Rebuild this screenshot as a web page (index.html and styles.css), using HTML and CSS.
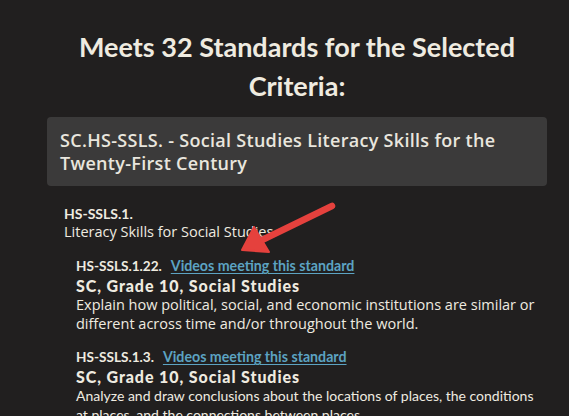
FILE: index.html
```html
<!DOCTYPE html>
<html lang="en">
<head>
<meta charset="utf-8">
<title>Standards</title>
<link rel="stylesheet" href="styles.css">
</head>
<body>
<div class="page">
  <h1 class="title">Meets 32 Standards for the Selected Criteria:</h1>
  <div class="domain">SC.HS-SSLS. - Social Studies Literacy Skills for the Twenty-First Century</div>
  <div class="strand">
    <div class="strand-code">HS-SSLS.1.</div>
    <div class="strand-name">Literacy Skills for Social Studies</div>
  </div>
  <div class="standard">
    <div class="std-head"><span class="std-code">HS-SSLS.1.22.</span><a class="std-link" href="#">Videos meeting this standard</a></div>
    <div class="std-grade">SC, Grade 10, Social Studies</div>
    <div class="std-desc">Explain how political, social, and economic institutions are similar or different across time and/or throughout the world.</div>
  </div>
  <div class="standard">
    <div class="std-head"><span class="std-code">HS-SSLS.1.3.</span><a class="std-link" href="#">Videos meeting this standard</a></div>
    <div class="std-grade">SC, Grade 10, Social Studies</div>
    <div class="std-desc std-desc-compact">Analyze and draw conclusions about the locations of places, the conditions at places, and the connections between places.</div>
  </div>
</div>
<svg class="arrow" width="569" height="416" viewBox="0 0 569 416" aria-hidden="true">
  <line x1="332" y1="206" x2="258" y2="242" stroke="#e5413d" stroke-width="6.5" stroke-linecap="round"/>
  <polygon points="242,250 254,227 269,252" fill="#e5413d" stroke="#e5413d" stroke-width="2" stroke-linejoin="round"/>
</svg>
</body>
</html>
```

FILE: styles.css
```css
html, body {
  margin: 0;
  padding: 0;
  background: #211f1f;
}
body {
  color: #efebe0;
  font-family: Lato, "Noto Sans", sans-serif;
  overflow: hidden;
  height: 416px;
}
.page {
  width: 500px;
  margin-left: 47px;
  display: flex;
  flex-direction: column;
}
.title {
  margin: 27px 0 0 0;
  padding: 0;
  text-align: center;
  font-size: 27px;
  line-height: 39px;
  font-weight: 700;
  color: #efebe0;
}
.domain {
  margin-top: 12px;
  background: #3b3a3a;
  border-radius: 4px;
  padding: 12px 14px 11px 13px;
  font-family: "Open Sans", Lato, sans-serif;
  font-size: 18px;
  line-height: 23px;
  font-weight: 600;
  letter-spacing: 0.3px;
  color: #e9e6de;
}
.strand {
  margin: 19px 0 0 17px;
  font-size: 14px;
  line-height: 18px;
}
.strand-code {
  font-weight: 700;
}
.strand-name {
  font-family: "Open Sans", Lato, sans-serif;
  font-size: 14.5px;
}
.standard {
  margin: 14px 0 0 29px;
  font-size: 14px;
  line-height: 19px;
  width: 482px;
}
.strand + .standard {
  margin-top: 15px;
}
.std-code {
  font-weight: 700;
  font-size: 13.6px;
}
.std-link {
  margin-left: 9px;
  color: #5ca3c2;
  font-weight: 700;
  font-size: 14.2px;
  text-decoration: underline;
  text-underline-offset: 2px;
}
.std-grade {
  font-weight: 900;
  font-size: 16px;
  letter-spacing: 0.9px;
}
.std-desc {
  font-family: "Open Sans", Lato, sans-serif;
  font-size: 14.5px;
}
.std-desc-compact {
  font-family: Lato, "Open Sans", sans-serif;
  font-size: 14px;
  max-width: 466px;
}
.arrow {
  position: absolute;
  left: 0;
  top: 0;
  pointer-events: none;
}
```
